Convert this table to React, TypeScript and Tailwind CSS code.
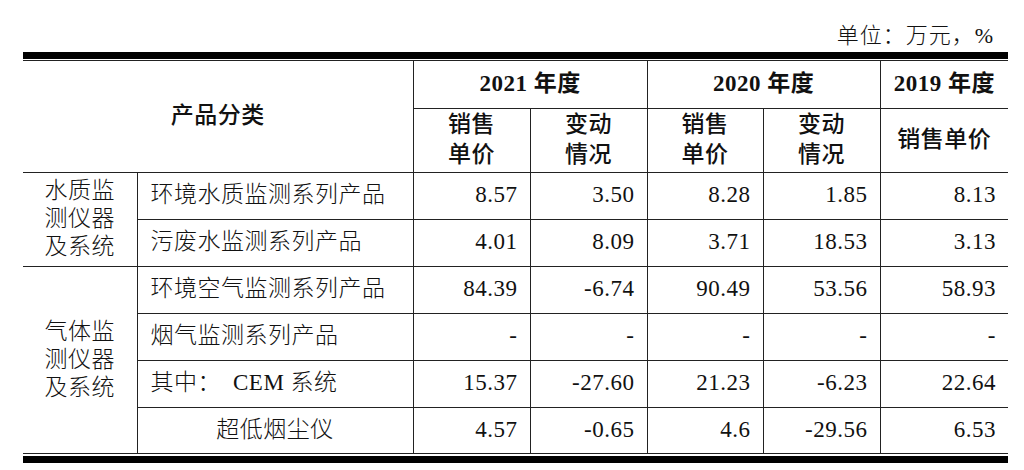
const rows: { name: React.ReactNode; center?: boolean; v: string[] }[] = [
  { name: "环境水质监测系列产品", v: ["8.57", "3.50", "8.28", "1.85", "8.13"] },
  { name: "污废水监测系列产品", v: ["4.01", "8.09", "3.71", "18.53", "3.13"] },
  { name: "环境空气监测系列产品", v: ["84.39", "-6.74", "90.49", "53.56", "58.93"] },
  { name: "烟气监测系列产品", v: ["-", "-", "-", "-", "-"] },
  {
    name: (
      <>
        其中：<span className="ml-[12px]">CEM 系统</span>
      </>
    ),
    v: ["15.37", "-27.60", "21.23", "-6.23", "22.64"],
  },
  { name: "超低烟尘仪", center: true, v: ["4.57", "-0.65", "4.6", "-29.56", "6.53"] },
];

const cell = "border-b border-r border-[#222]";

function Category({ rows }: { rows: string[] }) {
  return (
    <div className="font-light leading-[28px] text-center">
      {rows.map((r) => (
        <div key={r}>{r}</div>
      ))}
    </div>
  );
}

export default function App() {
  return (
    <div className="w-[1024px] h-[470px] bg-white pl-[23px] pr-[16px] text-[#111] font-['Liberation_Serif','Noto_Sans_CJK_SC',serif] overflow-hidden">
      <div className="h-[52px] flex items-end justify-end pr-[14px] pb-[3px] text-[22px] leading-[26px] font-light tracking-[1px]">
        单位：万元，%
      </div>
      <div className="h-[7px] bg-black" />
      <div className="h-[1px] mt-[1px] bg-[#222]" />
      <table className="w-[985px] table-fixed border-collapse text-[23px] tracking-[0.5px]">
        <colgroup>
          <col className="w-[114px]" />
          <col className="w-[276px]" />
          <col className="w-[117px]" />
          <col className="w-[117px]" />
          <col className="w-[116px]" />
          <col className="w-[117px]" />
          <col className="w-[128px]" />
        </colgroup>
        <thead>
          <tr className="h-[47px]">
            <th rowSpan={2} colSpan={2} className={`${cell} font-medium`}>
              产品分类
            </th>
            <th colSpan={2} className={`${cell} font-bold`}>
              2021 年度
            </th>
            <th colSpan={2} className={`${cell} font-bold`}>
              2020 年度
            </th>
            <th className="border-b border-[#222] font-bold">2019 年度</th>
          </tr>
          <tr className="h-[64px]">
            {["销售|单价", "变动|情况", "销售|单价", "变动|情况"].map((t, i) => (
              <th key={i} className={`${cell} font-medium leading-[30px]`}>
                {t.split("|").map((s) => (
                  <div key={s}>{s}</div>
                ))}
              </th>
            ))}
            <th className="border-b border-[#222] font-medium">销售单价</th>
          </tr>
        </thead>
        <tbody>
          {rows.map((r, i) => (
            <tr key={i} className={i === 5 ? "h-[46px]" : "h-[47px]"}>
              {i === 0 && (
                <td rowSpan={2} className={cell}>
                  <Category rows={["水质监", "测仪器", "及系统"]} />
                </td>
              )}
              {i === 2 && (
                <td rowSpan={4} className={cell}>
                  <Category rows={["气体监", "测仪器", "及系统"]} />
                </td>
              )}
              <td className={`${cell} font-light ${r.center ? "text-center" : "pl-[13px]"}`}>{r.name}</td>
              {r.v.map((v, j) => (
                <td
                  key={j}
                  className={`${j === 4 ? "border-b border-[#222]" : cell} text-right pr-[12px]`}
                >
                  {v}
                </td>
              ))}
            </tr>
          ))}
        </tbody>
      </table>
      <div className="h-[7px] mt-[2px] bg-black" />
    </div>
  );
}
